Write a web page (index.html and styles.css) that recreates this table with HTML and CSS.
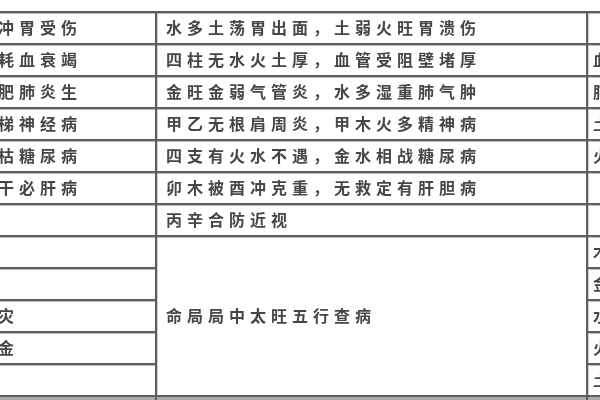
FILE: index.html
```html
<!DOCTYPE html>
<html lang="zh">
<head>
<meta charset="utf-8">
<title>五行查病</title>
<link rel="stylesheet" href="styles.css">
</head>
<body>
<div class="sheet">
  <div class="cell left">水多土冲胃受伤</div>
  <div class="cell mid">水多土荡胃出面，土弱火旺胃溃伤</div>
  <div class="cell right"></div>

  <div class="cell left">火炎土耗血衰竭</div>
  <div class="cell mid">四柱无水火土厚，血管受阻壁堵厚</div>
  <div class="cell right">血压高</div>

  <div class="cell left">金水寒肥肺炎生</div>
  <div class="cell mid">金旺金弱气管炎，水多湿重肺气肿</div>
  <div class="cell right">肺病</div>

  <div class="cell left">木火多梯神经病</div>
  <div class="cell mid">甲乙无根肩周炎，甲木火多精神病</div>
  <div class="cell right">土多</div>

  <div class="cell left">水火战枯糖尿病</div>
  <div class="cell mid">四支有火水不遇，金水相战糖尿病</div>
  <div class="cell right">火旺</div>

  <div class="cell left">卯酉冲干必肝病</div>
  <div class="cell mid">卯木被酉冲克重，无救定有肝胆病</div>
  <div class="cell right"></div>

  <div class="cell left"></div>
  <div class="cell mid">丙辛合防近视</div>
  <div class="cell right"></div>

  <div class="cell left"></div>
  <div class="cell mid merged">命局局中太旺五行查病</div>
  <div class="cell right">木</div>

  <div class="cell left"></div>
  <div class="cell right">金</div>

  <div class="cell left">防有血灾</div>
  <div class="cell right">水</div>

  <div class="cell left">必损财金</div>
  <div class="cell right">火</div>

  <div class="cell left"></div>
  <div class="cell right">土</div>

  <div class="cell foot"></div>
  <div class="cell foot"></div>
  <div class="cell foot"></div>
</div>
</body>
</html>
```

FILE: styles.css
```css
html, body {
  margin: 0;
  padding: 0;
  background: #ffffff;
}

body {
  width: 600px;
  height: 400px;
  overflow: hidden;
  padding-top: 11px;
  box-sizing: border-box;
  font-family: "Noto Sans CJK SC", "Noto Sans", sans-serif;
}

.sheet {
  display: grid;
  grid-template-columns: 229px 429px 200px;
  grid-template-rows: repeat(12, 30px) 12px;
  gap: 2px;
  padding-top: 2px;
  margin-left: -74px;
  width: 862px;
  background: #5e5e5e;
  filter: blur(0.5px);
}

.cell {
  background: #ffffff;
  box-shadow: inset 0 1px 0 #bdbdbd, inset 1px 0 0 #cfcfcf;
  display: flex;
  align-items: center;
  padding-bottom: 3px;
  box-sizing: border-box;
  font-size: 16px;
  font-weight: 700;
  line-height: 1;
  letter-spacing: 5px;
  color: #464646;
  white-space: nowrap;
  overflow: hidden;
}

.left {
  grid-column: 1;
  padding-left: 9px;
}

.mid {
  grid-column: 2;
  padding-left: 9px;
}

.right {
  grid-column: 3;
  padding-left: 5px;
}

.merged {
  grid-row: 8 / span 5;
}

.foot {
  background: #ababab;
  box-shadow: none;
}
```
